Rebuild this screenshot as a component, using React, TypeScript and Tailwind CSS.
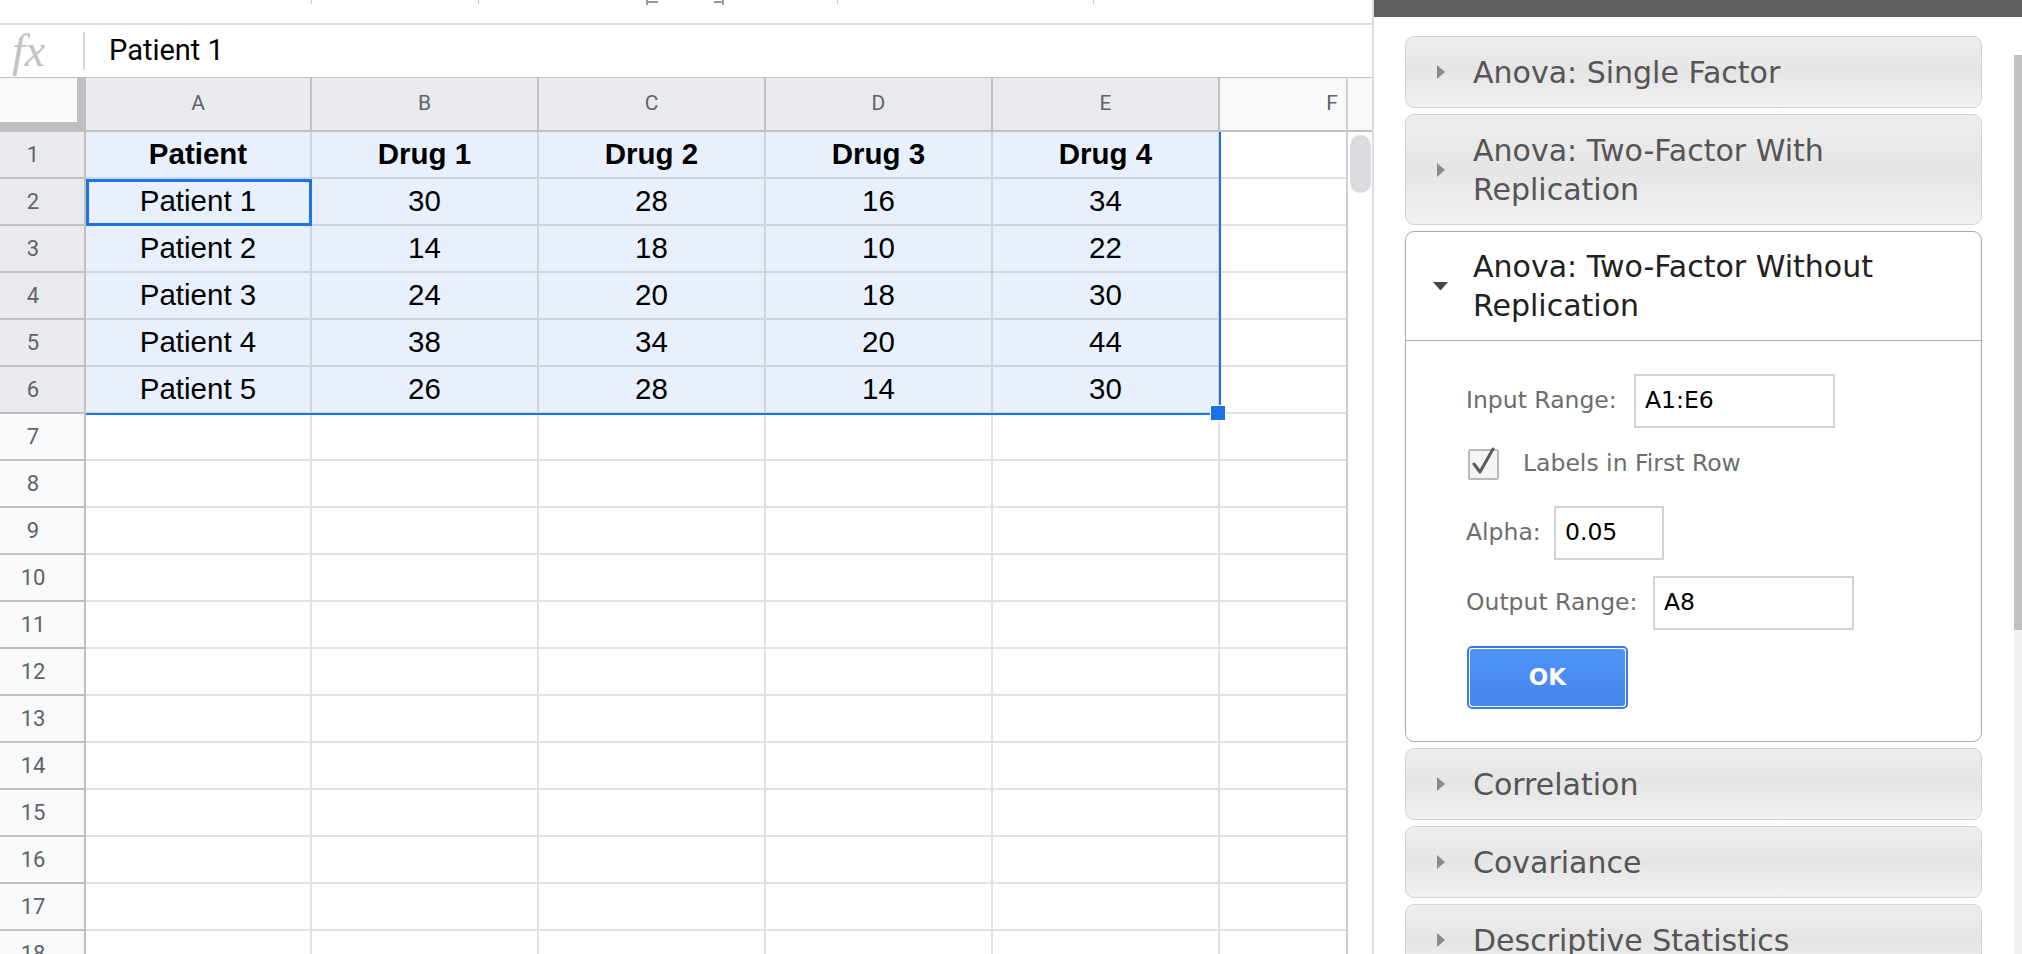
import React from "react";

const letters = ["A", "B", "C", "D", "E", "F"];
const colW = ["w-[226px]", "w-[227px]", "w-[227px]", "w-[227px]", "w-[227px]", "w-[226px]"];

const data: string[][] = [
  ["Patient", "Drug 1", "Drug 2", "Drug 3", "Drug 4"],
  ["Patient 1", "30", "28", "16", "34"],
  ["Patient 2", "14", "18", "10", "22"],
  ["Patient 3", "24", "20", "18", "30"],
  ["Patient 4", "38", "34", "20", "44"],
  ["Patient 5", "26", "28", "14", "30"],
];

function Grid() {
  const rows = Array.from({ length: 18 }, (_, i) => i + 1);
  return (
    <div className="relative w-[1346px] shrink-0 overflow-hidden">
      <div className="flex h-[55px]">
        <div className="w-[86px] h-[55px] shrink-0 border-t border-r-[9px] border-b-[10px] border-[#bfbfbf] bg-[#f8f9fa]" />
        {letters.map((l, i) => (
          <div
            key={l}
            className={`${colW[i]} h-[55px] shrink-0 border-t border-r-2 border-b-2 border-[#c0c0c0] ${
              i < 5 ? "bg-[#e8eaed]" : "bg-[#f8f9fa]"
            } flex items-center justify-center font-['Roboto',sans-serif] text-[21px] text-[#5f6368]`}
          >
            {l}
          </div>
        ))}
      </div>
      {rows.map((r) => (
        <div key={r} className="flex h-[47px]">
          <div
            className={`w-[86px] h-[47px] shrink-0 border-r-2 border-b-2 border-[#c0c0c0] ${
              r <= 6 ? "bg-[#e8eaed]" : "bg-[#f8f9fa]"
            } flex items-center`}
          >
            <span className="w-[66px] text-center font-['Roboto',sans-serif] text-[22px] text-[#5f6368]">{r}</span>
          </div>
          {letters.map((l, i) => {
            const inRange = r <= 6 && i < 5;
            const txt = inRange ? data[r - 1][i] : "";
            return (
              <div
                key={l}
                className={`${colW[i]} h-[47px] shrink-0 border-r-2 border-b-2 ${
                  inRange ? "bg-[#e8f0fe] border-[#cdd5e2]" : "bg-white border-[#e2e2e3]"
                } flex items-center justify-center font-['Liberation_Sans',Arial,sans-serif] text-[29.5px] text-black ${
                  r === 1 ? "font-bold" : ""
                }`}
              >
                {txt}
              </div>
            );
          })}
        </div>
      ))}
      {/* selection overlays */}
      <div className="absolute left-[1219px] top-[55px] w-[2px] h-[283px] bg-[#1a73e8]" />
      <div className="absolute left-[86px] top-[336px] w-[1135px] h-[2px] bg-[#1a73e8]" />
      <div className="absolute left-[86px] top-[102px] w-[226px] h-[47px] border-[3px] border-[#1a73e8]" />
      <div className="absolute left-[1210px] top-[328px] w-[16px] h-[16px] border border-white bg-[#1a73e8]" />
    </div>
  );
}

function SheetScroll() {
  return (
    <div className="w-[26px] shrink-0 border-l-2 border-[#cfcfcf] flex flex-col">
      <div className="h-[55px] shrink-0 border-t border-b-2 border-[#c0c0c0] bg-[#f8f9fa]" />
      <div className="flex-1 bg-white pt-[3px] pl-[2px]">
        <div className="w-[21px] h-[58px] rounded-full bg-[#dadce0]" />
      </div>
    </div>
  );
}

function Sheet() {
  return (
    <div className="w-[1374px] h-[954px] shrink-0 flex flex-col border-r-2 border-[#dadce0] overflow-hidden">
      <div className="relative h-[23px] shrink-0 bg-white">
        <div className="absolute left-[311px] top-0 w-[1px] h-[4px] bg-[#c8c8c8]" />
        <div className="absolute left-[478px] top-0 w-[1px] h-[4px] bg-[#c8c8c8]" />
        <div className="absolute left-[646px] top-0 w-[2px] h-[5px] bg-[#9a9a9a]" />
        <div className="absolute left-[646px] top-[1px] w-[12px] h-[2px] bg-[#9a9a9a]" />
        <div className="absolute left-[714px] top-[1px] w-[10px] h-[2px] bg-[#9a9a9a]" />
        <div className="absolute left-[722px] top-0 w-[2px] h-[5px] bg-[#9a9a9a]" />
        <div className="absolute left-[837px] top-0 w-[1px] h-[4px] bg-[#c8c8c8]" />
        <div className="absolute left-[1093px] top-0 w-[1px] h-[4px] bg-[#c8c8c8]" />
      </div>
      <div className="h-[2px] shrink-0 bg-[#dadce0]" />
      <div className="h-[52px] shrink-0 flex items-center bg-white pl-[12px]">
        <span className="w-[71px] font-['Liberation_Serif',serif] italic text-[46px] leading-none text-[#c2c2c2]">fx</span>
        <div className="w-[2px] h-[38px] bg-[#d6d6d6]" />
        <span className="ml-[24px] font-['Roboto',sans-serif] text-[29px] text-black">Patient 1</span>
      </div>
      <div className="flex flex-1 min-h-0">
        <Grid />
        <SheetScroll />
      </div>
    </div>
  );
}

function TriRight() {
  return (
    <svg width="10" height="16" viewBox="0 0 10 16">
      <path d="M1 1 L9 8 L1 15 Z" fill="#8a8a8a" />
    </svg>
  );
}

function Collapsed({ title }: { title: string }) {
  return (
    <div className="shrink-0 flex items-center rounded-[9px] border border-[#d3d3d3] bg-linear-to-b from-[#eeeeee] via-[#e5e5e5] to-[#f1f1f1] py-[15.5px] pr-[16px]">
      <div className="w-[67px] shrink-0 flex">
        <div className="ml-[30px] flex">
          <TriRight />
        </div>
      </div>
      <span className="flex-1 font-['DejaVu_Sans',sans-serif] text-[30px] leading-[39px] text-[#555555]">{title}</span>
    </div>
  );
}

function Field({ label, labelW, value, inputW }: { label: string; labelW: string; value: string; inputW: string }) {
  return (
    <div className="flex items-center h-[54px]">
      <span className={`${labelW} shrink-0 text-[23.5px] text-[#6d6d6d]`}>{label}</span>
      <div className={`${inputW} h-[54px] shrink-0 border-2 border-[#d2d2d2] bg-white flex items-center pl-[9px] text-[23.5px] text-black`}>
        {value}
      </div>
    </div>
  );
}

function Expanded() {
  return (
    <div className="shrink-0 rounded-[9px] border border-[#aaaaaa] bg-white font-['DejaVu_Sans',sans-serif]">
      <div className="flex items-center border-b border-[#aaaaaa] py-[15px] pr-[16px]">
        <div className="w-[67px] shrink-0 flex">
          <svg className="ml-[26px]" width="17" height="10" viewBox="0 0 17 10">
            <path d="M1 1 H16 L8.5 9.5 Z" fill="#454545" />
          </svg>
        </div>
        <span className="flex-1 text-[30px] leading-[39px] text-[#212121]">Anova: Two-Factor Without Replication</span>
      </div>
      <div className="pl-[60px] pt-[33px] pb-[32px] flex flex-col">
        <Field label="Input Range:" labelW="w-[168px]" value="A1:E6" inputW="w-[201px]" />
        <div className="mt-[21px] h-[30px] flex items-center">
          <svg className="ml-[2px]" width="34" height="34" viewBox="0 0 34 34">
            <rect x="1" y="3" width="29" height="29" rx="1.5" fill="#f4f4f4" stroke="#b9b9b9" strokeWidth="2" />
            <path d="M6 17 L12 25 L25 2" fill="none" stroke="#5a5a5a" strokeWidth="3" strokeLinecap="round" strokeLinejoin="round" />
          </svg>
          <span className="ml-[21px] text-[23.5px] text-[#6d6d6d]">Labels in First Row</span>
        </div>
        <div className="mt-[27px]">
          <Field label="Alpha:" labelW="w-[88px]" value="0.05" inputW="w-[110px]" />
        </div>
        <div className="mt-[16px]">
          <Field label="Output Range:" labelW="w-[187px]" value="A8" inputW="w-[201px]" />
        </div>
        <div className="mt-[16px] w-[161px] h-[63px] rounded-[5px] border-2 border-[#3b7ae4] bg-white p-px ml-[1px]">
          <div className="w-full h-full rounded-[3px] bg-linear-to-b from-[#4f93f9] to-[#4585ec] flex items-center justify-center text-[23px] font-bold text-white">
            OK
          </div>
        </div>
      </div>
    </div>
  );
}

function Panel() {
  return (
    <div className="flex-1 flex flex-col bg-white h-[954px]">
      <div className="h-[17px] shrink-0 bg-[#616161]" />
      <div className="flex flex-1 min-h-0 overflow-hidden">
        <div className="flex-1 pl-[31px] pr-[32px] pt-[19px] flex flex-col gap-[6px]">
          <Collapsed title="Anova: Single Factor" />
          <Collapsed title="Anova: Two-Factor With Replication" />
          <Expanded />
          <Collapsed title="Correlation" />
          <Collapsed title="Covariance" />
          <Collapsed title="Descriptive Statistics" />
        </div>
        <div className="w-[8px] shrink-0 flex flex-col bg-[#f1f1f1]">
          <div className="h-[38px] shrink-0 bg-white" />
          <div className="h-[575px] shrink-0 bg-[#c1c1c1]" />
        </div>
      </div>
    </div>
  );
}

export default function App() {
  return (
    <div className="w-[2022px] h-[954px] flex overflow-hidden bg-white">
      <Sheet />
      <Panel />
    </div>
  );
}
